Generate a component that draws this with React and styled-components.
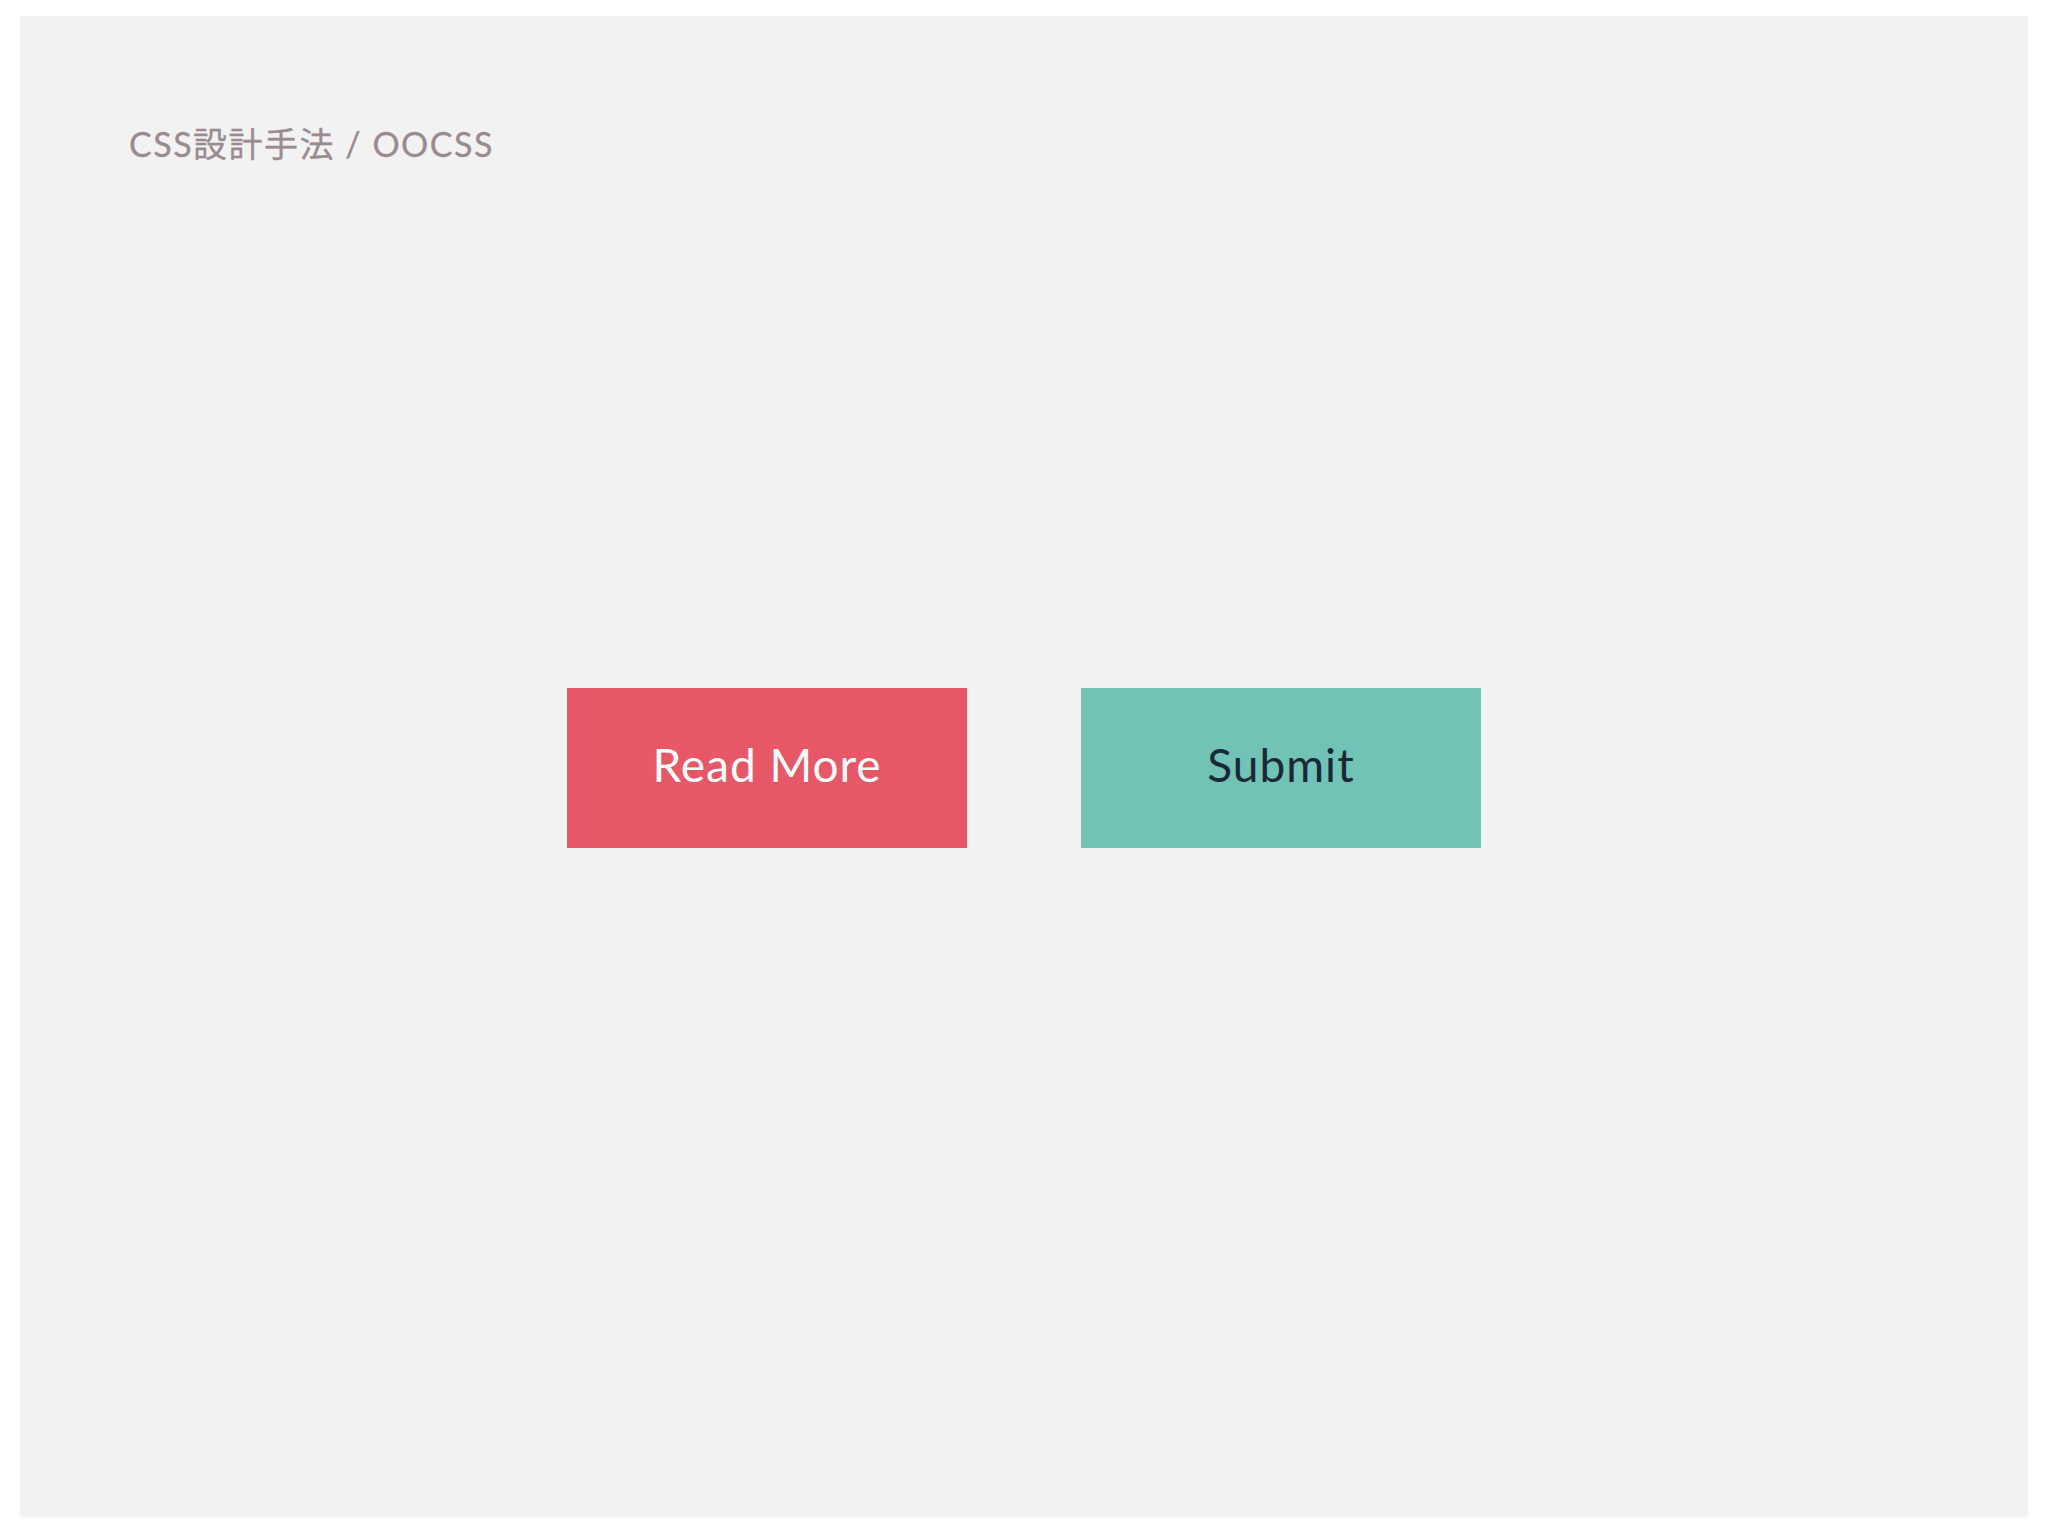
import React from 'react'
import styled, { createGlobalStyle } from 'styled-components'

const GlobalStyle = createGlobalStyle`
  html, body {
    margin: 0;
    padding: 0;
    background: #ffffff;
  }
  body {
    font-family: 'Lato', 'Noto Sans CJK JP', sans-serif;
  }
`

const Page = styled.div`
  width: 2048px;
  height: 1536px;
  box-sizing: border-box;
  padding: 16px 20px 20px 20px;
  display: flex;
`

const Slide = styled.section`
  flex: 1;
  display: flex;
  flex-direction: column;
  background: #f3f2f3;
  box-shadow: 0 2px 3px rgba(0, 0, 0, 0.04);
`

const Heading = styled.h1`
  margin: 0;
  height: 160px;
  box-sizing: border-box;
  padding: 110px 0 0 109px;
  font-size: 34px;
  line-height: 35px;
  font-weight: 400;
  letter-spacing: 1.5px;
  color: #998b8f;
  -webkit-text-stroke: 0.3px #998b8f;
`

const ButtonRow = styled.div`
  flex: 1;
  display: flex;
  align-items: center;
  justify-content: center;
  gap: 114px;
  padding-bottom: 156px;
`

const Button = styled.button`
  width: 400px;
  height: 160px;
  border: none;
  border-radius: 0;
  padding: 0 0 8px;
  font-family: 'Lato', sans-serif;
  font-size: 46px;
  font-weight: 400;
  letter-spacing: 1px;
  background: ${(props) => props.bg};
  color: ${(props) => props.fg};
  cursor: pointer;
`

const App = () => {
  return (
    <Page>
      <GlobalStyle />
      <Slide>
        <Heading>CSS設計手法 / OOCSS</Heading>
        <ButtonRow>
          <Button bg='#e85768' fg='#ffffff'>Read More</Button>
          <Button bg='#70c3b5' fg='#1b2835'>Submit</Button>
        </ButtonRow>
      </Slide>
    </Page>
  )
}

export default App
